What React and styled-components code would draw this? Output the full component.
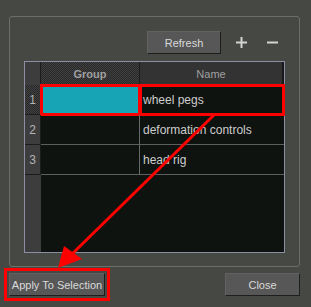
import { Fragment } from "react";
import styled, { createGlobalStyle } from "styled-components";

const GlobalStyle = createGlobalStyle`
  html, body {
    margin: 0;
    background: #464843;
  }
  body {
    font-family: "Liberation Sans", Arial, sans-serif;
    font-size: 11px;
  }
`;

const Dialog = styled.div`
  position: relative;
  width: 311px;
  height: 307px;
  box-sizing: border-box;
  padding: 16px 11px 0 9px;
  background: #464843;
  display: flex;
  flex-direction: column;
`;

const GroupBox = styled.div`
  height: 251px;
  box-sizing: border-box;
  border: 1px solid #6c6e6a;
  border-radius: 3px;
  padding: 14px 14px 13px;
  display: flex;
  flex-direction: column;
  gap: 7px;
`;

const Toolbar = styled.div`
  display: flex;
  justify-content: flex-end;
  align-items: center;
  gap: 9px;
  padding-right: 2px;
`;

const Button = styled.button`
  width: ${(p) => p.$w}px;
  height: 23px;
  padding: 0;
  box-sizing: border-box;
  background: #575757;
  color: #dadada;
  border: 1px solid;
  border-color: #626262 #1e1e1e #1e1e1e #626262;
  font: 11px "Liberation Sans", Arial, sans-serif;
  outline: ${(p) => (p.$marked ? "3px solid #ff0000" : "none")};
  outline-offset: 2px;
`;

const IconButton = styled.button`
  width: 22px;
  height: 22px;
  padding: 0;
  border: none;
  background: transparent;
  display: flex;
  align-items: center;
  justify-content: center;
`;

const Table = styled.div`
  height: 192px;
  box-sizing: border-box;
  border: 1px solid #8d8ea4;
  background: linear-gradient(to right, #3d3d3d 16px, #0f130f 16px);
  display: grid;
  grid-template-columns: 16px 99px 1fr;
  grid-template-rows: 23px repeat(3, 30px) 1fr;
`;

const dither = `
  background-color: #333;
  background-image: conic-gradient(#3f3f3f 25%, #2a2a2a 0 50%, #3f3f3f 0 75%, #2a2a2a 0);
  background-size: 2px 2px;
`;

const Corner = styled.div`
  background: #3d3d3d;
  border-right: 1px solid #1c1c1c;
`;

const HeadCell = styled.div`
  box-sizing: border-box;
  display: flex;
  align-items: center;
  justify-content: center;
  color: #a0a0a0;
  font-weight: ${(p) => (p.$active ? "bold" : "normal")};
  ${(p) => (p.$active ? dither : "background: #333333;")}
  border-right: ${(p) => (p.$last ? "2px solid #181818" : "1px solid #1c1c1c")};
`;

const RowNum = styled.div`
  box-sizing: border-box;
  display: flex;
  align-items: center;
  justify-content: center;
  color: #b4b4b4;
  font-size: 12px;
  border-right: 1px solid #1c1c1c;
  border-bottom: 1px solid #1c1c1c;
  ${(p) => (p.$active ? dither : "background: #3d3d3d;")}
`;

const Cell = styled.div`
  box-sizing: border-box;
  display: flex;
  align-items: center;
  padding-left: 3px;
  color: #cdcdcd;
  font-size: 12px;
  background: ${(p) => p.$color || "transparent"};
  border-bottom: 1px solid #5e5e5e;
  border-right: ${(p) => (p.$divider ? "1px solid #686868" : "none")};
  outline: ${(p) => (p.$marked ? "3px solid #ff0000" : "none")};
  outline-offset: -2px;
  white-space: nowrap;
`;

const Footer = styled.div`
  display: flex;
  justify-content: space-between;
  margin-top: 6px;
`;

const Overlay = styled.svg`
  position: absolute;
  left: 0;
  top: 0;
  width: 311px;
  height: 307px;
  pointer-events: none;
`;

const rows = [
  { n: 1, name: "wheel pegs", color: "#17a5b6", active: true },
  { n: 2, name: "deformation controls" },
  { n: 3, name: "head rig" },
];

export default function App() {
  return (
    <Dialog>
      <GlobalStyle />
      <GroupBox>
        <Toolbar>
          <Button $w={74}>Refresh</Button>
          <IconButton>
            <svg width="11" height="11" viewBox="0 0 11 11">
              <rect x="0" y="4.5" width="11" height="2" fill="#d4d4d4" />
              <rect x="4.5" y="0" width="2" height="11" fill="#d4d4d4" />
            </svg>
          </IconButton>
          <IconButton>
            <svg width="11" height="11" viewBox="0 0 11 11">
              <rect x="0" y="4.5" width="11" height="2" fill="#d4d4d4" />
            </svg>
          </IconButton>
        </Toolbar>
        <Table>
          <Corner />
          <HeadCell $active>Group</HeadCell>
          <HeadCell $last>Name</HeadCell>
          {rows.map((r) => (
            <Fragment key={r.n}>
              <RowNum $active={r.active}>{r.n}</RowNum>
              <Cell $divider $color={r.color} $marked={r.active} />
              <Cell $marked={r.active}>{r.name}</Cell>
            </Fragment>
          ))}
        </Table>
      </GroupBox>
      <Footer>
        <Button $w={96} $marked>Apply To Selection</Button>
        <Button $w={75}>Close</Button>
      </Footer>
      <Overlay viewBox="0 0 311 307">
        <line x1="215" y1="114" x2="70" y2="256" stroke="#ff0000" strokeWidth="3" />
        <polygon points="58,268 64,246 82,259" fill="#ff0000" />
      </Overlay>
    </Dialog>
  );
}
